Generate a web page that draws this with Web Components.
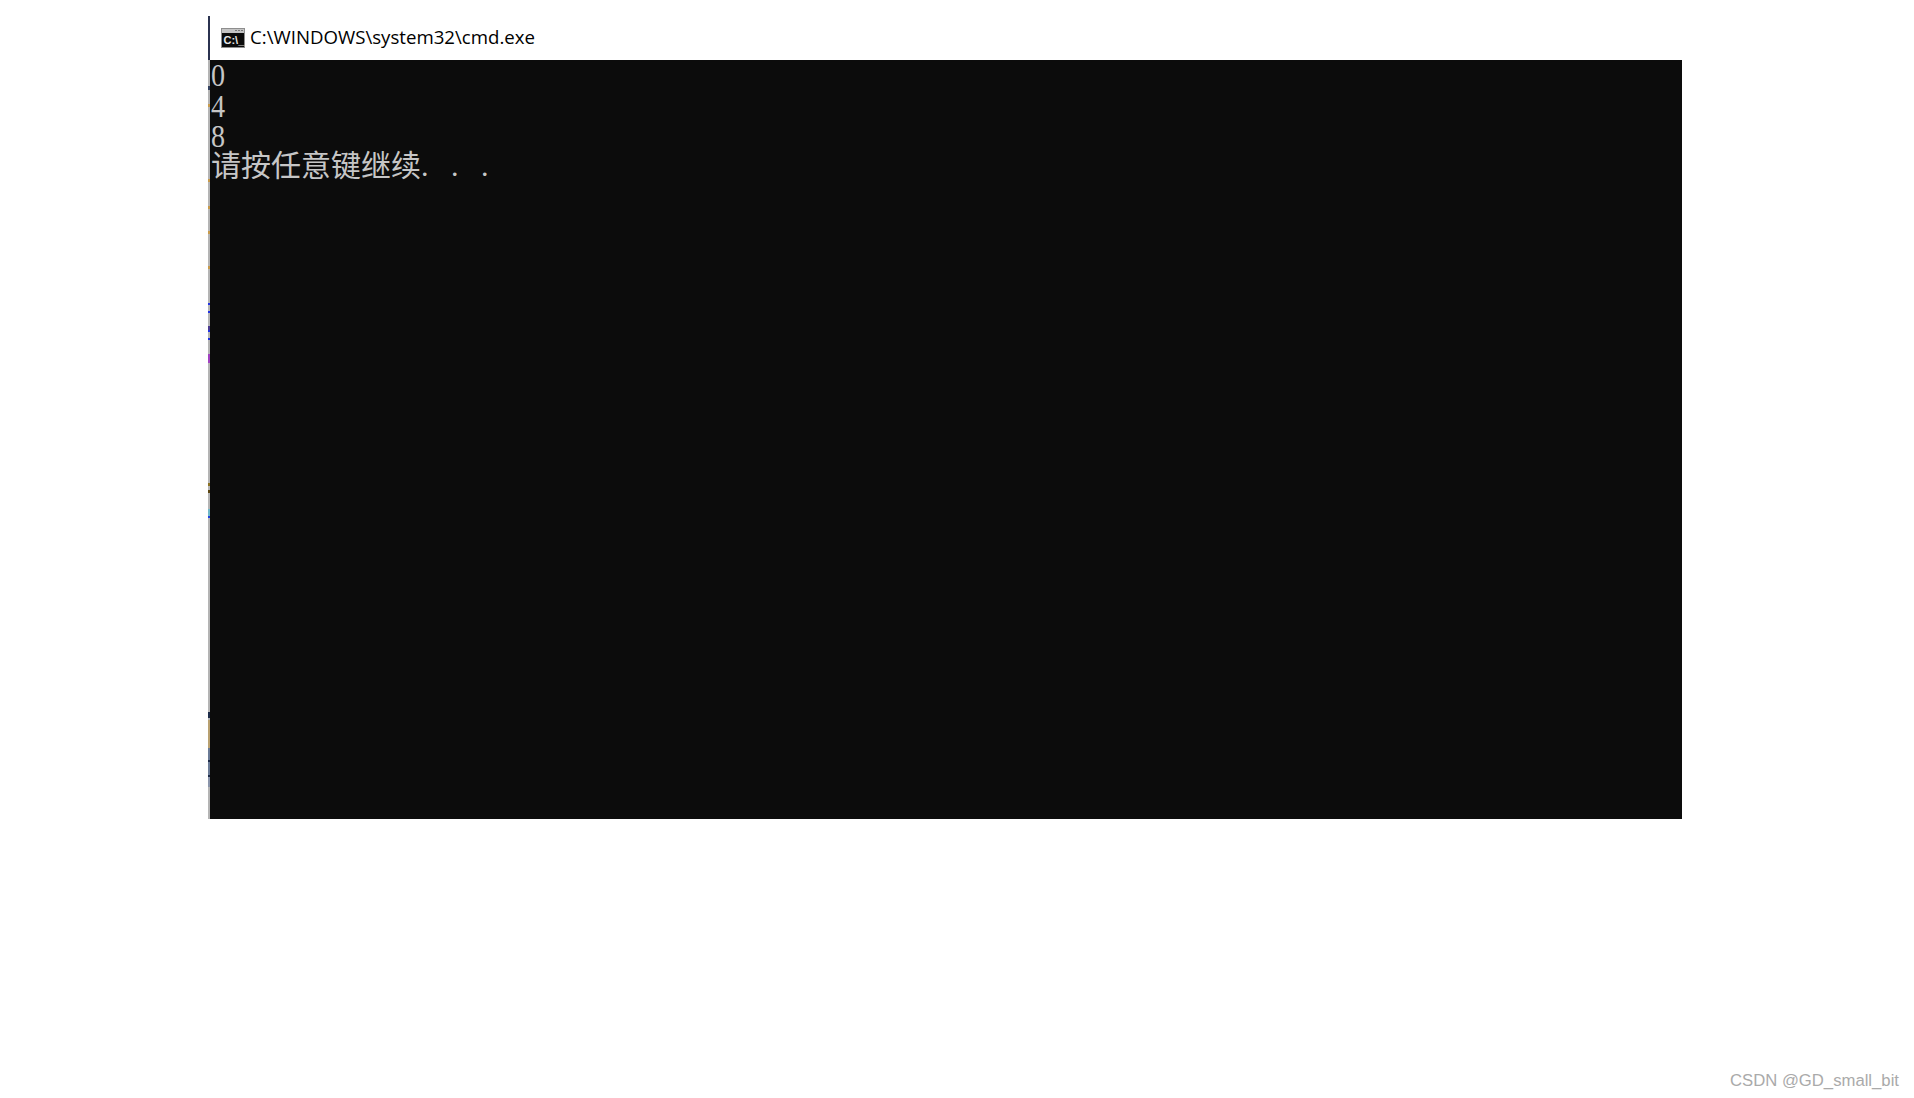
<!DOCTYPE html>
<html lang="zh"><head><meta charset="utf-8"><style>
html,body{margin:0;padding:0;background:#fff;height:100%}
body{height:1098px;overflow:hidden}
</style></head><body>
<cmd-page>
<cmd-window title-text="C:\WINDOWS\system32\cmd.exe">
<cmd-digits>0
4
8</cmd-digits>
<cmd-line>请按任意键继续<cmd-dots>. . .</cmd-dots></cmd-line>
</cmd-window>
<span slot="mark">CSDN @GD_small_bit</span>
</cmd-page>
<script>
const TICKS=[[16,44,'#2b3350'],[86,4,'#33415f'],[104,3,'#c79a4a'],[179,3,'#c79a4a'],[206,3,'#c79a4a'],[231,3,'#c79a4a'],[266,3,'#c79a4a'],[303,2,'#2030e0'],[311,2,'#2030e0'],[326,4,'#4a3a90'],[330,2,'#2030e0'],[338,2,'#2030e0'],[354,9,'#a040c0'],[483,3,'#8a7020'],[490,3,'#5a4410'],[509,7,'#70b8c8'],[516,2,'#2040e0'],[712,6,'#1c2a48'],[720,28,'#b8a070'],[748,12,'#6a7a95'],[760,2,'#1c2a48'],[762,13,'#6a7a95'],[775,2,'#1c2a48'],[777,10,'#8a94aa']];
class CmdPage extends HTMLElement{constructor(){super();this.attachShadow({mode:'open'}).innerHTML=`<style>
:host{display:flex;flex-direction:column;width:1914px;height:1098px;box-sizing:border-box;padding:16px 0 0 208px;background:#fff}
.foot{margin-top:auto;align-self:flex-end;padding:0 15px 7px 0;font:16.7px/20px "Liberation Sans",sans-serif;color:#aaa}
</style><slot></slot><div class="foot"><slot name="mark"></slot></div>`}}
class CmdWindow extends HTMLElement{constructor(){super();const t=this.getAttribute('title-text');
const ticks=TICKS.map(([y,h,c])=>`<i style="top:${y-16}px;height:${h}px;background:${c}"></i>`).join('');
this.attachShadow({mode:'open'}).innerHTML=`<style>
:host{display:flex;flex-direction:column;width:1474px;height:803px;border-left:2px solid #b4b4b4;box-sizing:border-box;position:relative}
.bar{height:44px;flex:none;display:flex;align-items:center;gap:5px;padding:0 0 0 11px;box-sizing:border-box;font:18.65px "Open Sans","Noto Sans",sans-serif;color:#000}
.bar span{padding-bottom:4px}
svg{flex:none;display:block}
i{position:absolute;left:-2px;width:2px}
</style><div class="bar"><svg width="24" height="20" viewBox="0 0 24 20"><rect width="24" height="20" fill="#8e8e8e"/><rect x="1" y="1" width="22" height="4" fill="#c4c4c4"/><rect x="14" y="2" width="2" height="1" fill="#777"/><rect x="17" y="2" width="2" height="1" fill="#777"/><rect x="20" y="2" width="2" height="1" fill="#777"/><rect x="1" y="5" width="22" height="14" fill="#0c0c0c"/><text x="2.5" y="16" font-family="Liberation Sans" font-size="11" font-weight="700" fill="#e8e8e8">C:\\_</text></svg><span>${t}</span></div><cmd-output><slot></slot></cmd-output>${ticks}`}}
class CmdOutput extends HTMLElement{constructor(){super();this.attachShadow({mode:'open'}).innerHTML=`<style>
:host{display:block;flex:1;background:#0c0c0c;color:#c6c6c6;font:30px/30px "Liberation Serif","Noto Sans CJK SC",serif;padding-left:1px}
</style><slot></slot>`}}
class CmdDigits extends HTMLElement{constructor(){super();this.attachShadow({mode:'open'}).innerHTML=`<style>
:host{display:block;height:91px;white-space:pre;font-size:32px;line-height:30.5px}
div{transform:scaleX(.88);transform-origin:0 50%}
</style><div><slot></slot></div>`}}
class CmdLine extends HTMLElement{constructor(){super();this.attachShadow({mode:'open'}).innerHTML=`<style>
:host{display:block;height:30px;white-space:pre}
</style><slot></slot>`}}
class CmdDots extends HTMLElement{constructor(){super();this.attachShadow({mode:'open'}).innerHTML=`<style>
:host{display:inline;letter-spacing:7.5px}
</style><slot></slot>`}}
customElements.define('cmd-dots',CmdDots);customElements.define('cmd-line',CmdLine);customElements.define('cmd-digits',CmdDigits);customElements.define('cmd-output',CmdOutput);customElements.define('cmd-window',CmdWindow);customElements.define('cmd-page',CmdPage);
</script></body></html>
